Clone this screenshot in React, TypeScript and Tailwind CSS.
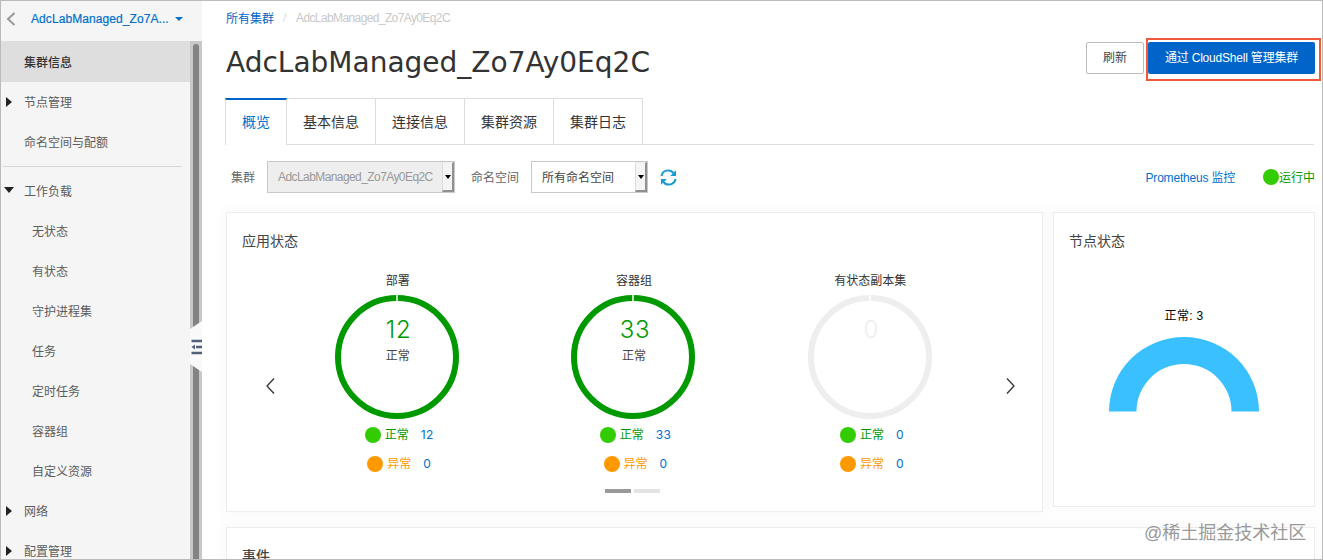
import clsx from "clsx";

type NavItem = {
  label: string;
  child?: boolean;
  arrow?: "right" | "down";
};

const workloads: NavItem[] = [
  { label: "工作负载", arrow: "down" },
  { label: "无状态", child: true },
  { label: "有状态", child: true },
  { label: "守护进程集", child: true },
  { label: "任务", child: true },
  { label: "定时任务", child: true },
  { label: "容器组", child: true },
  { label: "自定义资源", child: true },
  { label: "网络", arrow: "right" },
  { label: "配置管理", arrow: "right" },
];

const tabs = ["概览", "基本信息", "连接信息", "集群资源", "集群日志"];

const apps = [
  { title: "部署", ok: 12, bad: 0 },
  { title: "容器组", ok: 33, bad: 0 },
  { title: "有状态副本集", ok: 0, bad: 0 },
];

function NavRow({ label, child, arrow }: NavItem) {
  return (
    <div className="flex h-10 shrink-0 items-center">
      <span className={clsx("flex shrink-0", child ? "w-[31px]" : "w-[23px]")}>
        {arrow === "right" && (
          <svg className="ml-[5px]" width="6" height="10" viewBox="0 0 6 10">
            <path d="M0 0 6 5 0 10z" fill="#222" />
          </svg>
        )}
        {arrow === "down" && (
          <svg className="-mt-0.5 ml-[3px]" width="10" height="6" viewBox="0 0 10 6">
            <path d="M0 0H10L5 6z" fill="#222" />
          </svg>
        )}
      </span>
      <span className="pt-0.5">{label}</span>
    </div>
  );
}

function Sidebar() {
  return (
    <aside className="relative flex w-[201px] shrink-0 flex-col bg-[#f5f5f5] text-[#5c5c5c]">
      <div className="flex h-10 shrink-0 items-center pb-[5px] text-[#0070cc]">
        <svg className="ml-[5px]" width="10" height="14" viewBox="0 0 10 14" fill="none">
          <path d="M8.5 1 2 7l6.5 6" stroke="#999" strokeWidth="2" />
        </svg>
        <span className="ml-[15px] w-[138px] whitespace-nowrap tracking-[0.08px] [-webkit-text-stroke:0.2px]">
          AdcLabManaged_Zo7A...
        </span>
        <svg className="ml-[6px]" width="8" height="4" viewBox="0 0 8 4">
          <path d="M0 0H8L4 4z" fill="#0070cc" />
        </svg>
      </div>
      <div className="flex min-h-0 flex-1">
        <nav className="flex w-[189px] flex-col overflow-hidden">
          <div className="flex h-[41px] shrink-0 items-center bg-[#dedede] pt-0.5 pl-[23px] font-medium text-[#333]">
            集群信息
          </div>
          <NavRow label="节点管理" arrow="right" />
          <NavRow label="命名空间与配额" />
          <div className="mt-1 mr-2 mb-1 ml-0.5 h-px shrink-0 bg-[#d8d8d8]" />
          {workloads.map((item) => (
            <NavRow key={item.label} {...item} />
          ))}
        </nav>
        <div className="w-3 bg-[#c8c8c8] px-[3px] pt-[3px]">
          <div className="h-full rounded-t-full bg-[#838383]" />
        </div>
      </div>
      <svg className="absolute top-[320px] right-0" width="12" height="51" viewBox="0 0 12 51">
        <path d="M0 8 12 0V51L0 43z" fill="#f9f9f9" />
        <path d="M1.5 20H12M6 26H12M1.5 32H12" stroke="#526078" strokeWidth="2.4" />
        <path d="M1.5 26 5 23.5V28.5z" fill="#526078" />
      </svg>
    </aside>
  );
}

function SelectArrow() {
  return (
    <span className="flex h-full w-3 shrink-0 items-center justify-center border-t border-r-2 border-b-2 border-l border-t-[#eee] border-r-[#909090] border-b-[#909090] border-l-[#ddd] bg-[#f4f4f4]">
      <svg className="shrink-0" width="6" height="4" viewBox="0 0 6 4">
        <path d="M0 0H6L3 4z" fill="#000" />
      </svg>
    </span>
  );
}

function Legend({ label, value, ok }: { label: string; value: number; ok?: boolean }) {
  return (
    <div className="flex h-[29px] items-center justify-center pl-1">
      <span className={clsx("h-4 w-4 rounded-full", ok ? "bg-[#33cc00]" : "bg-[#ff9900]")} />
      <span className={clsx("ml-1 w-6 pt-px", ok ? "text-[#009900]" : "text-[#ff9900]")}>{label}</span>
      <span className="ml-3 font-[Inter,sans-serif] text-[12px] tracking-[0.3px] text-[#0070cc]">{value}</span>
    </div>
  );
}

function AppRing({ title, ok, bad }: { title: string; ok: number; bad: number }) {
  const empty = ok === 0;
  return (
    <div className="flex flex-1 flex-col">
      <div className="h-[22px] pl-px text-center leading-[22px] text-[#333]">{title}</div>
      <div className="grid h-[128px] justify-center">
        <svg className="col-start-1 row-start-1 mt-[3px]" width="124" height="124" viewBox="0 0 124 124" fill="none">
          <circle cx="62" cy="62" r="59" stroke={empty ? "#eee" : "#009900"} strokeWidth="6" />
          <path d="M62 0V7" stroke="#fff" strokeWidth="1.5" />
        </svg>
        <div className="col-start-1 row-start-1 pt-[23px] text-center">
          <div
            className={clsx(
              "h-[29px] pl-[3px] font-[Inter,sans-serif] text-2xl leading-[29px] font-light tracking-[0.8px]",
              empty ? "text-[#eee]" : "text-[#009900]",
            )}
          >
            {ok}
          </div>
          {!empty && <div className="h-6 pl-px leading-6 text-[#444]">正常</div>}
        </div>
      </div>
      <Legend label="正常" value={ok} ok />
      <Legend label="异常" value={bad} />
    </div>
  );
}

export default function App() {
  return (
    <div className="flex h-[560px] w-[1323px] overflow-hidden border border-[#bbb] bg-white font-['Liberation_Sans','Noto_Sans_CJK_SC',sans-serif] text-[12px] leading-[18px] text-[#666]">
      <Sidebar />
      <main className="flex min-w-0 flex-1 flex-col pl-[23px]">
        <div className="mt-2 flex h-[18px] shrink-0 items-center">
          <span className="ml-px pt-0.5 text-[#0064c8]">所有集群</span>
          <span className="ml-[9px] w-[13px] text-[#ddd]">/</span>
          <span className="tracking-[-0.61px] text-[#c8c8c8]">AdcLabManaged_Zo7Ay0Eq2C</span>
        </div>

        <div className="flex h-[71px] shrink-0">
          <h1 className="mt-[16px] ml-px font-['DejaVu_Sans',sans-serif] text-[28px] leading-[40px] text-[#333]">
            AdcLabManaged_Zo7Ay0Eq2C
          </h1>
          <button className="mt-[15px] ml-auto h-8 w-[58px] rounded-xs border border-[#bbb] text-[#444]">
            刷新
          </button>
          <div className="mt-[11px] mr-px ml-0.5 h-[43px] w-[175px] border-[2.5px] border-[#ee5a3b] pt-0.5">
            <button className="h-8 w-[167px] rounded-xs bg-[#0064c8] tracking-[-0.2px] whitespace-nowrap text-white">
              通过 CloudShell 管理集群
            </button>
          </div>
        </div>

        <div className="mr-2 flex h-[47px] shrink-0 text-sm text-[#333]">
          {tabs.map((tab, i) => (
            <div
              key={tab}
              className={clsx(
                "flex shrink-0 items-center justify-center border-r border-[#dedede]",
                i === 0
                  ? "w-[62px] border-t-2 border-l border-t-[#0064c8] pb-px text-[#0070cc]"
                  : "w-[89px] border-t border-b",
              )}
            >
              {tab}
            </div>
          ))}
          <div className="flex-1 border-b border-[#dedede]" />
        </div>

        <div className="mr-[7px] mt-4 flex h-8 shrink-0 items-center">
          <span className="ml-[6px] pt-0.5">集群</span>
          <div className="ml-3 flex h-8 w-[188px] items-center border border-[#c8c8c8] bg-[#eee] text-[#999]">
            <span className="w-[174px] pl-[10px] tracking-[-0.58px]">AdcLabManaged_Zo7Ay0Eq2C</span>
            <SelectArrow />
          </div>
          <span className="ml-4 pt-0.5">命名空间</span>
          <div className="ml-3 flex h-8 w-[117px] items-center border border-[#c8c8c8] text-[#444]">
            <span className="w-[103px] pt-0.5 pl-[10px]">所有命名空间</span>
            <SelectArrow />
          </div>
          <svg className="mt-px ml-3 shrink-0" width="17" height="17" viewBox="0 0 17 17" fill="none">
            <path d="M1.5 7A6.7 6.7 0 0 1 13.5 4.2M15.5 10A6.7 6.7 0 0 1 3.5 12.8" stroke="#169bd5" strokeWidth="2" />
            <path d="M16 1.2V7h-5.8zM1 15.8V10h5.8z" fill="#169bd5" />
          </svg>
          <span className="ml-auto pt-0.5 tracking-[-0.2px] text-[#0070cc]">Prometheus 监控</span>
          <span className="ml-7 h-4 w-4 rounded-full bg-[#33cc00]" />
          <span className="pt-0.5 text-[#009900]">运行中</span>
        </div>

        <div className="mt-[19px] flex shrink-0 items-start gap-[10px] pl-px">
          <section className="h-[300px] w-[817px] border border-[#ededed] bg-white shadow-[0_0_12px_4px_rgba(0,0,0,0.025)]">
            <h2 className="mt-[18px] ml-[15px] h-5 text-sm leading-5 text-[#444]">应用状态</h2>
            <div className="mt-[19px] flex items-center">
              <div className="w-[52px] pl-[39px]">
                <svg className="mt-[22px]" width="9" height="16" viewBox="0 0 9 16" fill="none">
                  <path d="M8 .5 1 8l7 7.5" stroke="#333" strokeWidth="1.3" />
                </svg>
              </div>
              <div className="flex h-[210px] w-[709px]">
                {apps.map((app) => (
                  <AppRing key={app.title} {...app} />
                ))}
              </div>
              <div className="pl-[18px]">
                <svg className="mt-[22px]" width="9" height="16" viewBox="0 0 9 16" fill="none">
                  <path d="m1 .5 7 7.5-7 7.5" stroke="#333" strokeWidth="1.3" />
                </svg>
              </div>
            </div>
            <div className="mt-[9px] ml-[378px] flex gap-[3px]">
              <span className="h-1 w-[26px] bg-[#999]" />
              <span className="h-1 w-[26px] bg-[#e3e3e3]" />
            </div>
          </section>

          <section className="h-[295px] w-[262px] border border-[#ededed] bg-white shadow-[0_0_12px_4px_rgba(0,0,0,0.025)]">
            <h2 className="mt-[18px] ml-[15px] h-5 text-sm leading-5 text-[#444]">节点状态</h2>
            <div className="mt-[56px] text-center leading-[18px] tracking-[0.3px] text-black">正常: 3</div>
            <svg className="mt-[12px] ml-[55px]" width="150" height="75" viewBox="0 0 150 75">
              <path d="M0 74.5A75 74.5 0 0 1 150 74.5H122.5A47.5 47.5 0 0 0 27.5 74.5z" fill="#3bc0ff" />
            </svg>
          </section>
        </div>

        <section className="mt-[15px] ml-px h-[80px] w-[1089px] shrink-0 border border-[#ededed] bg-white shadow-[0_0_12px_4px_rgba(0,0,0,0.025)]">
          <h2 className="mt-[18px] ml-[15px] text-sm leading-5 font-medium text-[#444]">事件</h2>
        </section>
      </main>
      <div className="absolute top-[521px] left-[1144px] text-[18px] leading-6 whitespace-nowrap text-[#999] [text-shadow:0_0_1px_#fff]">
        @稀土掘金技术社区
      </div>
    </div>
  );
}
